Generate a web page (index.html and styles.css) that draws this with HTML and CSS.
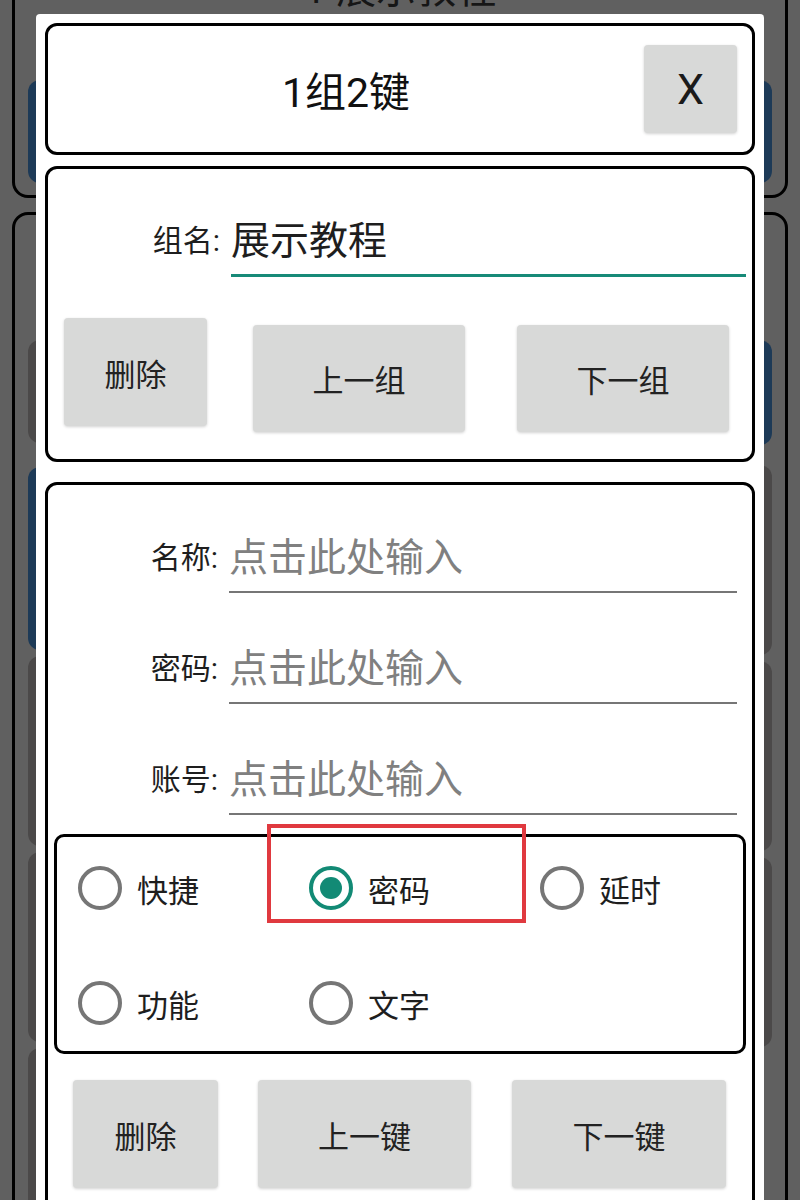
FILE: index.html
```html
<!DOCTYPE html>
<html lang="zh-CN">
<head>
<meta charset="utf-8">
<title>1组2键</title>
<link rel="stylesheet" href="styles.css">
</head>
<body>
<div class="page">
  <div class="bg-card bg-card-top">
    <div class="bg-title">1 展示教程</div>
    <div class="bg-row">
      <div class="tile blue tile-top"></div>
      <div class="tile blue tile-top"></div>
    </div>
  </div>
  <div class="bg-card bg-card-main">
    <div class="bg-col">
      <div class="tile grey t1"></div>
      <div class="tile blue t2"></div>
      <div class="tile grey t3"></div>
      <div class="tile grey t3"></div>
      <div class="tile grey t3"></div>
    </div>
    <div class="bg-col">
      <div class="tile blue t1r"></div>
      <div class="tile grey t3"></div>
      <div class="tile grey t3"></div>
      <div class="tile grey t3"></div>
    </div>
  </div>
</div>

<div class="dialog">
  <div class="card title-card">
    <div class="title">1组2键</div>
    <div class="btn close">X</div>
  </div>

  <div class="card group-card">
    <div class="field-row group-row">
      <div class="label">组名:</div>
      <div class="field field-active">展示教程</div>
    </div>
    <div class="btn-row group-btns">
      <div class="btn btn-del">删除</div>
      <div class="btn btn-nav btn-prev">上一组</div>
      <div class="btn btn-nav btn-next">下一组</div>
    </div>
  </div>

  <div class="card key-card">
    <div class="field-row key-row">
      <div class="label">名称:</div>
      <div class="field placeholder">点击此处输入</div>
    </div>
    <div class="field-row key-row">
      <div class="label">密码:</div>
      <div class="field placeholder">点击此处输入</div>
    </div>
    <div class="field-row key-row key-row-last">
      <div class="label">账号:</div>
      <div class="field placeholder">点击此处输入</div>
    </div>

    <div class="radio-box">
      <div class="radio"><span class="circle"></span><span class="radio-text">快捷</span></div>
      <div class="radio"><span class="circle checked"></span><span class="radio-text">密码</span></div>
      <div class="radio"><span class="circle"></span><span class="radio-text">延时</span></div>
      <div class="radio"><span class="circle"></span><span class="radio-text">功能</span></div>
      <div class="radio"><span class="circle"></span><span class="radio-text">文字</span></div>
    </div>

    <div class="btn-row key-btns">
      <div class="btn kb-del">删除</div>
      <div class="btn kb-prev">上一键</div>
      <div class="btn kb-next">下一键</div>
    </div>
  </div>

  <div class="highlight"></div>
</div>
</body>
</html>
```

FILE: styles.css
```css
* {
  box-sizing: border-box;
}

html, body {
  margin: 0;
  padding: 0;
  height: 1200px;
  overflow: hidden;
}

body {
  background: #606060;
  font-family: Roboto, "Noto Sans CJK SC", sans-serif;
  color: #1e1e1e;
}

/* ---------- dimmed page behind the dialog ---------- */
.page {
  padding: 0 12px;
}

.bg-card {
  border: 3px solid #000;
  border-radius: 16px;
}

.bg-card-top {
  margin-top: -60px;
  height: 258px;
  padding-top: 22px;
}

.bg-title {
  text-align: center;
  font-size: 40px;
  line-height: 50px;
  color: #161616;
}

.bg-row {
  display: flex;
  justify-content: space-between;
  padding: 0 13px;
  margin-top: 65px;
}

.tile {
  border-radius: 12px;
}

.tile-top {
  width: 320px;
  height: 103px;
}

.blue {
  background: #1d3a57;
}

.grey {
  background: #4b4949;
}

.bg-card-main {
  margin-top: 14px;
  height: 1040px;
  display: flex;
  justify-content: space-between;
  padding: 125px 13px 0;
}

.bg-col {
  width: 300px;
  display: flex;
  flex-direction: column;
  gap: 6px;
}

.t1 {
  height: 103px;
  margin-bottom: 18px;
}

.t2 {
  height: 183px;
}

.t3 {
  height: 190px;
}

.t1r {
  height: 105px;
  margin-bottom: 14px;
}

/* ---------- dialog ---------- */
.dialog {
  position: absolute;
  left: 36px;
  top: 14px;
  width: 728px;
  height: 1220px;
  background: #fff;
  border-radius: 4px;
  padding: 9px;
}

.card {
  border: 3px solid #000;
  border-radius: 12px;
  background: #fff;
}

.btn {
  background: #d8d9d8;
  border-radius: 4px;
  box-shadow: 0 1px 3px rgba(0, 0, 0, 0.18);
  display: flex;
  align-items: center;
  justify-content: center;
  font-size: 31px;
  color: #222;
}

/* title */
.title-card {
  height: 132px;
  display: flex;
  align-items: center;
}

.title {
  flex: 1;
  text-align: center;
  font-size: 41px;
  color: #111;
}

.close {
  width: 93px;
  height: 88px;
  margin-right: 15px;
  font-size: 43px;
  color: #1a1a1a;
}

/* group card */
.group-card {
  margin-top: 11px;
  padding: 45px 0 27px;
}

.field-row {
  display: flex;
  align-items: flex-start;
}

.label {
  font-size: 30px;
  line-height: 54px;
  text-align: right;
  flex: none;
  color: #1e1e1e;
}

.field {
  flex: 1;
  line-height: 54px;
  font-size: 39px;
  white-space: nowrap;
}

.group-row .label {
  width: 172px;
  margin-right: 11px;
}

.field-active {
  border-bottom: 3px solid #178a78;
  margin-right: 6px;
  color: #1e1e1e;
  height: 63px;
}

.btn-row {
  display: flex;
  align-items: flex-start;
}

.group-btns {
  margin-top: 41px;
  padding-left: 16px;
}

.btn-del {
  width: 143px;
  height: 108px;
  margin-right: 46px;
}

.btn-nav {
  width: 212px;
  height: 107px;
  margin-top: 7px;
}

.btn-prev {
  margin-right: 52px;
}

/* key card */
.key-card {
  margin-top: 20px;
  padding-top: 46px;
  height: 760px;
}

.key-row {
  margin-bottom: 49px;
}

.key-row-last {
  margin-bottom: 0;
}

.key-row .label {
  width: 170px;
  margin-right: 11px;
}

.placeholder {
  color: #808080;
  border-bottom: 2px solid #767676;
  margin-right: 15px;
  height: 62px;
}

.radio-box {
  margin: 19px 6px 0;
  height: 220px;
  border: 3px solid #000;
  border-radius: 10px;
  padding: 21px 0 0 21px;
  display: grid;
  grid-template-columns: 231px 231px 231px;
  grid-auto-rows: 60px;
  row-gap: 55px;
}

.radio {
  display: flex;
  align-items: center;
}

.circle {
  width: 44px;
  height: 44px;
  border: 4px solid #767676;
  border-radius: 50%;
  margin-right: 15px;
  display: flex;
  align-items: center;
  justify-content: center;
  flex: none;
}

.circle.checked {
  border-color: #128a75;
}

.circle.checked::after {
  content: "";
  width: 22px;
  height: 22px;
  border-radius: 50%;
  background: #128a75;
}

.radio-text {
  font-size: 31px;
  color: #1e1e1e;
}

.key-btns {
  margin-top: 26px;
  padding-left: 25px;
}

.kb-del {
  width: 145px;
  height: 108px;
  margin-right: 40px;
}

.kb-prev {
  width: 213px;
  height: 108px;
  margin-right: 41px;
}

.kb-next {
  width: 214px;
  height: 108px;
}

/* annotation overlay */
.highlight {
  position: absolute;
  left: 231px;
  top: 810px;
  width: 259px;
  height: 99px;
  border: 4px solid #e0393f;
}
```
